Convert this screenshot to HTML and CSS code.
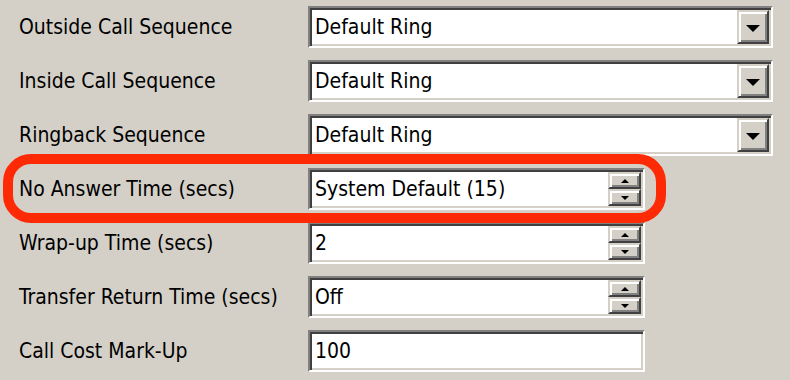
FILE: index.html
```html
<!doctype html>
<html lang="en">
  <head>
    <meta charset="UTF-8" />
    <meta name="viewport" content="width=device-width, initial-scale=1.0" />
    <title>Call Settings</title>
    <link rel="stylesheet" href="styles.css">
  </head>

  <body>
    <div class="form">
      <div class="row">
        <label class="label">Outside Call Sequence</label>
        <div class="field combo">
          <span class="value">Default Ring</span>
          <span class="btn drop"><i class="arrow-down"></i></span>
        </div>
      </div>
      <div class="row">
        <label class="label">Inside Call Sequence</label>
        <div class="field combo">
          <span class="value">Default Ring</span>
          <span class="btn drop"><i class="arrow-down"></i></span>
        </div>
      </div>
      <div class="row">
        <label class="label">Ringback Sequence</label>
        <div class="field combo">
          <span class="value">Default Ring</span>
          <span class="btn drop"><i class="arrow-down"></i></span>
        </div>
      </div>
      <div class="row">
        <label class="label">No Answer Time (secs)</label>
        <div class="field spin">
          <span class="value">System Default (15)</span>
          <span class="spin-btns">
            <span class="btn small"><i class="tri-up"></i></span>
            <span class="btn small"><i class="tri-down"></i></span>
          </span>
        </div>
      </div>
      <div class="row">
        <label class="label">Wrap-up Time (secs)</label>
        <div class="field spin">
          <span class="value">2</span>
          <span class="spin-btns">
            <span class="btn small"><i class="tri-up"></i></span>
            <span class="btn small"><i class="tri-down"></i></span>
          </span>
        </div>
      </div>
      <div class="row">
        <label class="label">Transfer Return Time (secs)</label>
        <div class="field spin">
          <span class="value">Off</span>
          <span class="spin-btns">
            <span class="btn small"><i class="tri-up"></i></span>
            <span class="btn small"><i class="tri-down"></i></span>
          </span>
        </div>
      </div>
      <div class="row">
        <label class="label">Call Cost Mark-Up</label>
        <div class="field text">
          <span class="value">100</span>
        </div>
      </div>

      <!-- highlight round "No Answer Time" -->
      <div class="highlight"></div>
    </div>
  </body>
</html>
```

FILE: styles.css
```css
html,
body {
  margin: 0;
  padding: 0;
  width: 100%;
  height: 100%;
  overflow: hidden;
  background-color: #d4d0c8;
}
.form {
  position: relative;
  display: flex;
  flex-direction: column;
  gap: 12px;
  padding: 6px 0 0 19px;
  font-family: "DejaVu Sans Condensed", "DejaVu Sans", sans-serif;
  font-size: 21px;
  color: #000;
}
.row {
  display: grid;
  grid-template-columns: 289px auto;
  align-items: center;
  height: 42px;
}
.label {
  white-space: nowrap;
}
.field {
  box-sizing: border-box;
  height: 42px;
  display: flex;
  align-items: stretch;
  background: #fff;
  border: 2px solid;
  border-color: #808080 #fff #fff #808080;
  box-shadow: inset 2px 2px 0 #404040, inset -2px -2px 0 #d4d0c8;
  padding: 2px;
}
.combo {
  width: 465px;
}
.spin,
.text {
  width: 337px;
}
.value {
  flex: 1;
  display: flex;
  align-items: center;
  padding-left: 3px;
  white-space: nowrap;
}
.btn {
  box-sizing: border-box;
  display: flex;
  align-items: center;
  justify-content: center;
  background: #d4d0c8;
  border: 2px solid;
  border-color: #d4d0c8 #404040 #404040 #d4d0c8;
  box-shadow: inset 2px 2px 0 #fff, inset -2px -2px 0 #808080;
}
.drop {
  width: 32px;
}
.spin-btns {
  display: flex;
  flex-direction: column;
  width: 33px;
}
.small {
  flex: 1;
}
.arrow-down {
  width: 0;
  height: 0;
  border-left: 7px solid transparent;
  border-right: 7px solid transparent;
  border-top: 7px solid #000;
  margin-top: 2px;
}
.tri-up,
.tri-down {
  width: 0;
  height: 0;
  border-left: 4px solid transparent;
  border-right: 4px solid transparent;
}
.tri-up {
  border-bottom: 4px solid #000;
}
.tri-down {
  border-top: 4px solid #000;
}
.highlight {
  position: absolute;
  left: 3px;
  top: 154px;
  width: 663px;
  height: 69px;
  box-sizing: border-box;
  border: 10px solid #fe2a06;
  border-radius: 28px;
  pointer-events: none;
}
```
